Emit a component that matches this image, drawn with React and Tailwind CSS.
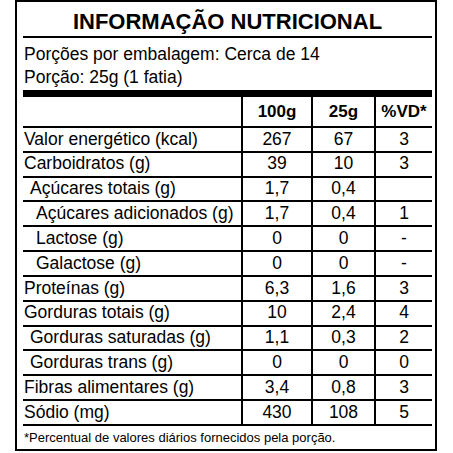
import React from "react";

const rows = [
  { label: "Valor energético (kcal)", a: "267", b: "67", vd: "3", level: 0 },
  { label: "Carboidratos (g)", a: "39", b: "10", vd: "3", level: 0 },
  { label: "Açúcares totais (g)", a: "1,7", b: "0,4", vd: "", level: 1 },
  { label: "Açúcares adicionados (g)", a: "1,7", b: "0,4", vd: "1", level: 2 },
  { label: "Lactose (g)", a: "0", b: "0", vd: "-", level: 2 },
  { label: "Galactose (g)", a: "0", b: "0", vd: "-", level: 2 },
  { label: "Proteínas (g)", a: "6,3", b: "1,6", vd: "3", level: 0 },
  { label: "Gorduras totais (g)", a: "10", b: "2,4", vd: "4", level: 0 },
  { label: "Gorduras saturadas (g)", a: "1,1", b: "0,3", vd: "2", level: 1 },
  { label: "Gorduras trans (g)", a: "0", b: "0", vd: "0", level: 1 },
  { label: "Fibras alimentares (g)", a: "3,4", b: "0,8", vd: "3", level: 0 },
  { label: "Sódio (mg)", a: "430", b: "108", vd: "5", level: 0 },
];

const indent = ["pl-[1px]", "pl-[7px]", "pl-[13px]"];

const App = () => {
  return (
    <div className="w-[453px] h-[453px] bg-white font-['Liberation_Sans',Arial,sans-serif] text-black">
      <div className="ml-[15px] w-[422px] h-[451px] border-2 border-black pl-[6px] pr-[3px]">
        {/* title */}
        <div className="h-[34px] pt-[8px] text-center text-[22px] leading-[24px] font-bold">
          INFORMAÇÃO NUTRICIONAL
        </div>
        <div className="h-[2px] bg-black" />

        {/* porções */}
        <div className="h-[52px] pt-[5px] text-[17.5px] leading-[23px]">
          <div className="pl-[1px]">Porções por embalagem: Cerca de 14</div>
          <div className="pl-[1px]">Porção: 25g (1 fatia)</div>
        </div>
        <div className="h-[7px] bg-black" />

        {/* header */}
        <div className="grid grid-cols-[218px_70px_63px_58px] h-[31px] border-b-2 border-black text-[17px] font-bold">
          <div />
          <div className="border-l-2 border-black flex items-center justify-center">100g</div>
          <div className="border-l-2 border-black flex items-center justify-center">25g</div>
          <div className="border-l-2 border-black flex items-center justify-center">%VD*</div>
        </div>

        {/* rows */}
        {rows.map((r) => (
          <div
            key={r.label}
            className="grid grid-cols-[218px_70px_63px_58px] h-[24.83px] border-b-2 border-black text-[17.5px] leading-none"
          >
            <div className={"flex items-center whitespace-nowrap " + indent[r.level]}>{r.label}</div>
            <div className="border-l-2 border-black flex items-center justify-center">{r.a}</div>
            <div className="border-l-2 border-black flex items-center justify-center">{r.b}</div>
            <div className="border-l-2 border-black flex items-center justify-center">{r.vd}</div>
          </div>
        ))}

        {/* footer */}
        <div className="h-[23px] pl-[1px] text-[13px] leading-[23px]">
          *Percentual de valores diários fornecidos pela porção.
        </div>
      </div>
    </div>
  );
};

export default App;
